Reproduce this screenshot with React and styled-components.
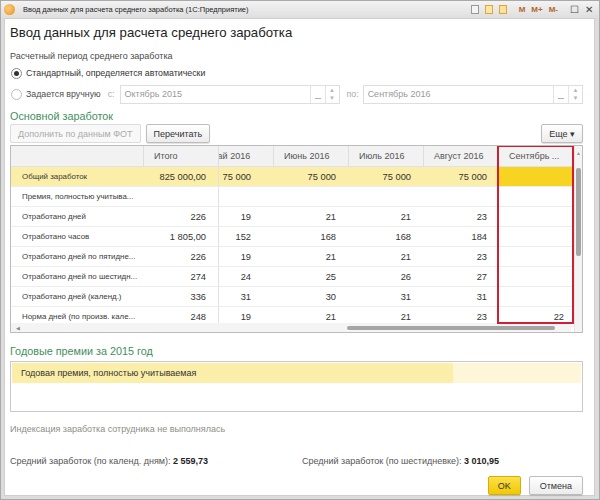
import React from "react";
import styled, { createGlobalStyle, css } from "styled-components";

const GlobalStyle = createGlobalStyle`
  html, body { margin: 0; padding: 0; background: #fff; }
  body { font-family: "Liberation Sans", Arial, sans-serif; color: #333; }
  * { box-sizing: border-box; }
`;

const Frame = styled.div`
  width: 600px;
  height: 500px;
  background: #dcdcdc;
  border: 1px solid #a9a9a9;
  display: flex;
  flex-direction: column;
  overflow: hidden;
`;

const TitleBar = styled.div`
  height: 18px;
  display: flex;
  align-items: center;
  padding: 0 6px 0 3px;
  background: linear-gradient(#f3f3f3, #dedede);
  font-size: 7.5px;
  color: #222;
`;

const AppIcon = styled.div`
  width: 11px;
  height: 11px;
  border-radius: 50%;
  background: radial-gradient(circle at 40% 40%, #ffd07a, #e98a1c);
  margin-right: 8px;
  flex: none;
`;

const TitleText = styled.span`
  flex: 1;
  white-space: nowrap;
`;

const TitleTools = styled.div`
  display: flex;
  align-items: center;
  gap: 6px;
`;

const ToolIcon = styled.div`
  width: 8px;
  height: 9px;
  border: 1px solid ${(p) => p.$border};
  background: ${(p) => p.$bg};
`;

const MemKey = styled.span`
  font-size: 8px;
  font-weight: bold;
  color: #b0672a;
`;

const WinBtn = styled.span`
  font-size: 10px;
  color: #444;
  line-height: 1;
`;

const Body = styled.div`
  flex: 1;
  background: #fff;
  margin: 0 4px 3px 3px;
  padding: 0 11px 0 5px;
  display: flex;
  flex-direction: column;
  border: 1px solid #cfcfcf;
`;

const Heading = styled.div`
  margin-top: 4px;
  font-size: 13.2px;
  line-height: 20px;
  color: #222;
`;

const Caption = styled.div`
  margin-top: ${(p) => p.$mt || 0}px;
  font-size: 9px;
  line-height: 14px;
  white-space: nowrap;
  color: ${(p) => p.$color || "#4a4a4a"};
`;

const RadioRow = styled.div`
  display: flex;
  align-items: center;
  height: ${(p) => p.$h}px;
  margin-top: ${(p) => p.$mt}px;
  font-size: 8.8px;
  white-space: nowrap;
  color: ${(p) => (p.$dim ? "#4d4d4d" : "#333")};
`;

const Radio = styled.span`
  width: 11px;
  height: 11px;
  border-radius: 50%;
  border: 1px solid ${(p) => (p.$on ? "#8a8a8a" : "#bdbdbd")};
  background: #fff;
  margin: 0 4px 0 1px;
  display: flex;
  align-items: center;
  justify-content: center;
  flex: none;
  &::after {
    content: "";
    width: 5px;
    height: 5px;
    border-radius: 50%;
    background: ${(p) => (p.$on ? "#333" : "transparent")};
  }
`;

const Muted = styled.span`
  color: #aaa;
  margin: ${(p) => p.$m};
`;

const Field = styled.div`
  display: flex;
  width: ${(p) => (p.$w ? `${p.$w}px` : "auto")};
  flex: ${(p) => (p.$w ? "none" : 1)};
  height: 19px;
  border: 1px solid #dedede;
  background: #fff;
`;

const FieldText = styled.div`
  flex: 1;
  padding-left: 4px;
  line-height: 17px;
  color: #9a9a9a;
  font-size: 9px;
`;

const FieldBtn = styled.div`
  width: ${(p) => p.$w}px;
  border-left: 1px solid #e4e4e4;
  display: flex;
  flex-direction: column;
  align-items: center;
  justify-content: ${(p) => (p.$spin ? "space-around" : "flex-end")};
  padding-bottom: ${(p) => (p.$spin ? 0 : 4)}px;
  color: #b5b5b5;
  font-size: 6px;
  line-height: 1;
`;

const Underscore = styled.span`
  width: 6px;
  border-bottom: 1px solid #b0b0b0;
`;

const SectionTitle = styled.div`
  margin-top: ${(p) => p.$mt}px;
  font-size: 10.8px;
  line-height: 16px;
  color: #3f8f5f;
`;

const ButtonRow = styled.div`
  display: flex;
  align-items: center;
  gap: 5px;
  height: 19px;
`;

const Button = styled.button`
  height: 19px;
  padding: 0 ${(p) => p.$px || 8}px;
  font-family: inherit;
  font-size: 9px;
  white-space: nowrap;
  border-radius: 2px;
  border: 1px solid ${(p) => (p.$disabled ? "#dcdcdc" : "#bdbdbd")};
  color: ${(p) => (p.$disabled ? "#ababab" : "#333")};
  background: ${(p) =>
    p.$disabled ? "#f8f8f8" : "linear-gradient(#ffffff, #ececec)"};
  box-shadow: ${(p) => (p.$disabled ? "none" : "0 1px 1px rgba(0,0,0,0.12)")};
  ${(p) =>
    p.$primary &&
    css`
      background: linear-gradient(#fbe04a, #f1c800);
      border-color: #d4b000;
    `}
`;

const Spacer = styled.div`
  flex: 1;
`;

const Table = styled.div`
  position: relative;
  margin-top: 2px;
  height: 188px;
  border: 1px solid #bcbcbc;
  display: flex;
  overflow: hidden;
`;

const Grid = styled.div`
  flex: 1;
  display: grid;
  grid-template-columns: 132px 75px 55px 75px 75px 75px 76px;
  grid-auto-rows: 20px;
  grid-template-rows: 21px;
  align-content: start;
`;

const HeadCell = styled.div`
  background: #f2f2f2;
  border-bottom: 1px solid #e2e2e2;
  border-left: ${(p) => (p.$first ? "none" : "1px solid #dedede")};
  font-size: 9px;
  color: #555;
  line-height: 20px;
  padding-left: 10px;
  white-space: nowrap;
  overflow: hidden;
`;

const Shift = styled.span`
  display: inline-block;
  margin-left: ${(p) => p.$dx}px;
`;

const Cell = styled.div`
  line-height: 20px;
  white-space: nowrap;
  overflow: hidden;
  border-bottom: 1px solid #ededed;
  border-left: ${(p) => (p.$sep ? "1px solid #e2e2e2" : "none")};
  text-align: ${(p) => (p.$name ? "left" : "right")};
  padding: 0 ${(p) => (p.$name ? 0 : p.$pr || 11)}px 0
    ${(p) => (p.$name ? 11 : 0)}px;
  font-size: ${(p) => (p.$name ? 7.9 : 9.3)}px;
  color: ${(p) => (p.$name ? "#3a3a3a" : "#333")};
  background: ${(p) =>
    p.$current ? "#f8d422" : p.$hl ? "#fbeea8" : "transparent"};
`;

const VScroll = styled.div`
  width: 10px;
  background: #f4f4f4;
  border-left: 1px solid #e6e6e6;
  display: flex;
  flex-direction: column;
  align-items: center;
  padding-top: 4px;
  font-size: 5px;
  color: #999;
`;

const VThumb = styled.div`
  margin-top: 12px;
  width: 5px;
  height: 88px;
  border-radius: 2px;
  background: #a5a5a5;
`;

const HScroll = styled.div`
  position: absolute;
  left: 0;
  right: 11px;
  bottom: 0;
  height: 9px;
  background: #f4f4f4;
  display: flex;
  align-items: center;
  padding-left: 5px;
  font-size: 5px;
  color: #888;
`;

const HThumb = styled.div`
  margin-left: 327px;
  width: 208px;
  height: 4px;
  border-radius: 2px;
  background: #a5a5a5;
`;

const Marker = styled.div`
  position: absolute;
  left: 486px;
  top: -1px;
  width: 77px;
  height: 179px;
  border: 2px solid #cf1f33;
  pointer-events: none;
`;

const BonusBox = styled.div`
  margin-top: 2px;
  height: 51px;
  border: 1px solid #c9c9c9;
  padding: 1px;
`;

const BonusRow = styled.div`
  height: 20px;
  display: flex;
  font-size: 9px;
  line-height: 20px;
  color: #333;
`;

const BonusName = styled.div`
  width: 441px;
  padding-left: 9px;
  background: #fbeea8;
`;

const BonusRest = styled.div`
  flex: 1;
  background: #fdf6d8;
`;

const Totals = styled.div`
  margin-top: 18px;
  display: grid;
  grid-template-columns: 292px 1fr;
  font-size: 9px;
  line-height: 14px;
  color: #555;
  & b {
    color: #222;
  }
`;

const Footer = styled.div`
  margin-top: 8px;
  display: flex;
  justify-content: flex-end;
  gap: 8px;
`;

const rows = [
  { name: "Общий заработок", v: ["825 000,00", "75 000", "75 000", "75 000", "75 000", ""], hl: true },
  { name: "Премия, полностью учитыва...", v: ["", "", "", "", "", ""] },
  { name: "Отработано дней", v: ["226", "19", "21", "21", "23", ""] },
  { name: "Отработано часов", v: ["1 805,00", "152", "168", "168", "184", ""] },
  { name: "Отработано дней по пятидне...", v: ["226", "19", "21", "21", "23", ""] },
  { name: "Отработано дней по шестидн...", v: ["274", "24", "25", "26", "27", ""] },
  { name: "Отработано дней (календ.)", v: ["336", "31", "30", "31", "31", ""] },
  { name: "Норма дней (по произв. кале...", v: ["248", "19", "21", "21", "23", "22"] },
];

const padRight = [12, 22, 12, 12, 11, 10];

export default function App() {
  return (
    <>
      <GlobalStyle />
      <Frame>
        <TitleBar>
          <AppIcon />
          <TitleText>Ввод данных для расчета среднего заработка  (1С:Предприятие)</TitleText>
          <TitleTools>
            <ToolIcon $border="#999" $bg="#f4f4f4" />
            <ToolIcon $border="#e0a43a" $bg="#fbe7a6" />
            <ToolIcon $border="#e0a43a" $bg="#fbe0a0" />
            <span />
            <MemKey>M</MemKey>
            <MemKey>M+</MemKey>
            <MemKey>M-</MemKey>
            <span />
            <WinBtn>☐</WinBtn>
            <WinBtn>✕</WinBtn>
          </TitleTools>
        </TitleBar>
        <Body>
          <Heading>Ввод данных для расчета среднего заработка</Heading>
          <Caption $mt={6}>Расчетный период среднего заработка</Caption>
          <RadioRow $h={18} $mt={1}>
            <Radio $on />
            Стандартный, определяется автоматически
          </RadioRow>
          <RadioRow $h={20} $mt={2} $dim>
            <Radio />
            Задается вручную
            <Muted $m="0 5px 0 7px">с:</Muted>
            <Field $w={220}>
              <FieldText>Октябрь 2015</FieldText>
              <FieldBtn $w={15}><Underscore /></FieldBtn>
              <FieldBtn $w={14} $spin>
                <span>▲</span>
                <span>▼</span>
              </FieldBtn>
            </Field>
            <Muted $m="0 4px 0 7px">по:</Muted>
            <Field>
              <FieldText>Сентябрь 2016</FieldText>
              <FieldBtn $w={15}><Underscore /></FieldBtn>
              <FieldBtn $w={14} $spin>
                <span>▲</span>
                <span>▼</span>
              </FieldBtn>
            </Field>
          </RadioRow>
          <SectionTitle $mt={4}>Основной заработок</SectionTitle>
          <ButtonRow>
            <Button $disabled $px={7}>Дополнить по данным ФОТ</Button>
            <Button $px={7}>Перечитать</Button>
            <Spacer />
            <Button $px={7}>Еще ▾</Button>
          </ButtonRow>
          <Table>
            <Grid>
              <HeadCell $first />
              <HeadCell>Итого</HeadCell>
              <HeadCell><Shift $dx={-19}>Май 2016</Shift></HeadCell>
              <HeadCell>Июнь 2016</HeadCell>
              <HeadCell>Июль 2016</HeadCell>
              <HeadCell>Август 2016</HeadCell>
              <HeadCell>Сентябрь ...</HeadCell>
              {rows.map((r) => (
                <React.Fragment key={r.name}>
                  <Cell $name $hl={r.hl}>{r.name}</Cell>
                  {r.v.map((val, i) => (
                    <Cell
                      key={i}
                      $hl={r.hl}
                      $current={r.hl && i === 5}
                      $sep={i === 1}
                      $pr={padRight[i]}
                    >
                      {val}
                    </Cell>
                  ))}
                </React.Fragment>
              ))}
            </Grid>
            <VScroll>
              <span>▲</span>
              <VThumb />
            </VScroll>
            <HScroll>
              <span>◀</span>
              <HThumb />
            </HScroll>
            <Marker />
          </Table>
          <SectionTitle $mt={10}>Годовые премии за 2015 год</SectionTitle>
          <BonusBox>
            <BonusRow>
              <BonusName>Годовая премия, полностью учитываемая</BonusName>
              <BonusRest />
            </BonusRow>
          </BonusBox>
          <Caption $mt={10} $color="#8e8e86">Индексация заработка сотрудника не выполнялась</Caption>
          <Totals>
            <span>Средний заработок (по календ. дням): <b>2 559,73</b></span>
            <span>Средний заработок (по шестидневке): <b>3 010,95</b></span>
          </Totals>
          <Footer>
            <Button $primary $px={9}>OK</Button>
            <Button $px={10}>Отмена</Button>
          </Footer>
        </Body>
      </Frame>
    </>
  );
}
